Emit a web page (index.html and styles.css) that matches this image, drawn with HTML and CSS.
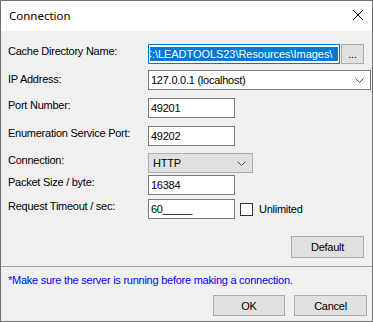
FILE: index.html
```html
<!DOCTYPE html>
<html lang="en">
<head>
  <meta charset="UTF-8">
  <title>Connection</title>
  <link rel="stylesheet" href="styles.css">
</head>
<body>
  <div class="window">
    <div class="titlebar">
      <span class="title">Connection</span>
      <svg class="close" width="12" height="12" viewBox="0 0 12 12">
        <path d="M1 1 L11 11 M11 1 L1 11" stroke="#000" stroke-width="1" fill="none"/>
      </svg>
    </div>

    <div class="content">
      <div class="form">
        <div class="row first">
          <span class="label">Cache Directory Name:</span>
          <div class="field path focused"><span class="selected">C:\LEADTOOLS23\Resources\Images\</span></div>
          <button class="btn browse">...</button>
        </div>
        <div class="row g6">
          <span class="label low">IP Address:</span>
          <div class="field combo wide">
            <span>127.0.0.1 (localhost)</span>
            <svg class="chevron" width="9" height="5" viewBox="0 0 9 5"><path d="M0.5 0.5 L4.5 4.5 L8.5 0.5" stroke="#444" fill="none"/></svg>
          </div>
        </div>
        <div class="row g8">
          <span class="label">Port Number:</span>
          <div class="field short">49201</div>
        </div>
        <div class="row g8">
          <span class="label">Enumeration Service Port:</span>
          <div class="field short">49202</div>
        </div>
        <div class="row g7">
          <span class="label">Connection:</span>
          <div class="field combo flat">
            <span>HTTP</span>
            <svg class="chevron" width="9" height="5" viewBox="0 0 9 5"><path d="M0.5 0.5 L4.5 4.5 L8.5 0.5" stroke="#555" fill="none"/></svg>
          </div>
        </div>
        <div class="row g2">
          <span class="label">Packet Size / byte:</span>
          <div class="field short">16384</div>
        </div>
        <div class="row g4">
          <span class="label">Request Timeout / sec:</span>
          <div class="field short">60_____</div>
          <label class="check"><span class="box"></span>Unlimited</label>
        </div>
        <div class="actions">
          <button class="btn default">Default</button>
        </div>
      </div>

      <div class="separator"></div>

      <p class="note">*Make sure the server is running before making a connection.</p>

      <div class="footer">
        <button class="btn ok">OK</button>
        <button class="btn cancel">Cancel</button>
      </div>
    </div>
  </div>
</body>
</html>
```

FILE: styles.css
```css
html, body { margin: 0; padding: 0; }
body {
  background: #f0f0f0;
  font-family: "Liberation Sans", Arial, sans-serif;
  font-size: 11px;
  letter-spacing: -0.25px;
  color: #000;
}

.window {
  width: 373px;
  height: 322px;
  box-sizing: border-box;
  border: 1px solid #707070;
  background: #f0f0f0;
  display: flex;
  flex-direction: column;
  overflow: hidden;
}

.titlebar {
  height: 30px;
  background: #fff;
  display: flex;
  align-items: center;
  justify-content: space-between;
  padding: 0 8px 0 8px;
}
.title {
  font-family: "Noto Sans", sans-serif;
  font-size: 11.5px;
  letter-spacing: 0;
  margin-top: -1px;
}
.close { margin-top: -2px; }

.content { flex: 1; display: flex; flex-direction: column; }

.form { padding: 13px 8px 0 7px; }

.row { display: flex; align-items: flex-start; height: 20px; }
.g2 { margin-top: 2px; }
.g4 { margin-top: 4px; }
.g6 { margin-top: 6px; }
.g7 { margin-top: 7px; }
.g8 { margin-top: 8px; }

.label { width: 140px; flex: none; line-height: 13px; padding-top: 1px; }
.label.low { padding-top: 3px; }

.field {
  flex: none;
  box-sizing: border-box;
  height: 20px;
  border: 1px solid #7a7a7a;
  background: #fff;
  line-height: 13px;
  padding: 3px 1px 0 2px;
  white-space: nowrap;
  overflow: hidden;
}
.short { width: 87px; }

.path { width: 192px; }
.focused { border-color: #0078d7; padding: 2px 1px 0 1px; }
.selected {
  display: block;
  background: #0078d7;
  color: #fff;
  height: 14px;
  line-height: 14px;
  overflow: hidden;
  text-indent: -6px;
  letter-spacing: -0.05px;
}

.combo {
  display: flex;
  align-items: flex-start;
  justify-content: space-between;
  padding-right: 6px;
}
.combo .chevron { margin-top: 4px; }
.wide { width: 223px; }
.flat { width: 105px; background: #e1e1e1; border-color: #adadad; padding-left: 4px; }

.btn {
  flex: none;
  box-sizing: border-box;
  font-family: "Liberation Sans", Arial, sans-serif;
  font-size: 11px;
  letter-spacing: -0.25px;
  background: #e1e1e1;
  border: 1px solid #adadad;
  color: #000;
  padding: 0;
  margin: 0;
}
.browse { width: 23px; height: 20px; margin-left: 1px; line-height: 14px; }

.check { display: flex; align-items: center; margin: 4px 0 0 5px; line-height: 13px; }
.box {
  width: 13px;
  height: 13px;
  box-sizing: border-box;
  border: 1px solid #333;
  background: #fff;
  margin-right: 6px;
}

.actions { display: flex; justify-content: flex-end; margin-top: 17px; }
.default { width: 73px; height: 22px; }

.separator { height: 1px; background: #a0a0a0; margin-top: 8px; }

.note { margin: 7px 0 0 7px; color: #0000ff; line-height: 13px; }

.footer { display: flex; justify-content: flex-end; gap: 9px; margin-top: 8px; padding-right: 5px; }
.ok { width: 72px; height: 21px; }
.cancel { width: 73px; height: 21px; }
```
